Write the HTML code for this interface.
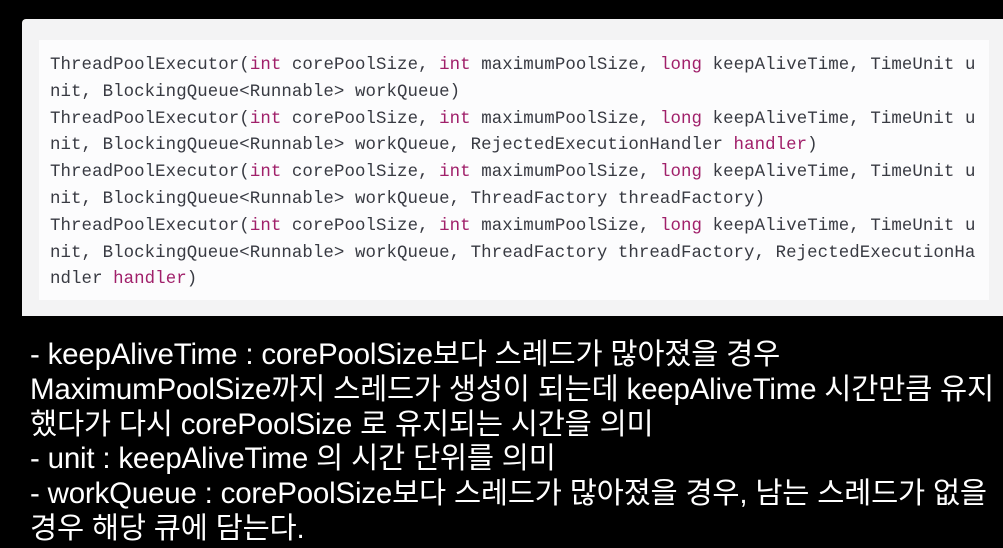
<!DOCTYPE html>
<html><head><meta charset="utf-8"><style>
html,body{margin:0;padding:0;background:#000;width:1003px;height:548px;overflow:hidden}
.outer{position:absolute;left:22px;top:19px;width:981px;height:297px;background:#f3f3f4;border-radius:4px 0 0 0}
.inner{position:absolute;left:39px;top:40px;width:950px;height:260px;background:#fcfcfd}
pre{position:absolute;left:50px;top:53px;margin:0;font-family:"Liberation Mono",monospace;font-size:17.4px;line-height:26.8px;color:#383a42;letter-spacing:0.08px}
.k{color:#a0206a}
.t{position:absolute;left:30px;top:338px;color:#fff;font-family:"Liberation Sans","Noto Sans CJK KR",sans-serif;font-size:29.5px;line-height:34.8px;white-space:pre;letter-spacing:-0.2px}
</style></head><body>
<div class="outer"></div><div class="inner"></div>
<pre>ThreadPoolExecutor(<span class="k">int</span> corePoolSize, <span class="k">int</span> maximumPoolSize, <span class="k">long</span> keepAliveTime, TimeUnit u
nit, BlockingQueue&lt;Runnable&gt; workQueue)
ThreadPoolExecutor(<span class="k">int</span> corePoolSize, <span class="k">int</span> maximumPoolSize, <span class="k">long</span> keepAliveTime, TimeUnit u
nit, BlockingQueue&lt;Runnable&gt; workQueue, RejectedExecutionHandler <span class="k">handler</span>)
ThreadPoolExecutor(<span class="k">int</span> corePoolSize, <span class="k">int</span> maximumPoolSize, <span class="k">long</span> keepAliveTime, TimeUnit u
nit, BlockingQueue&lt;Runnable&gt; workQueue, ThreadFactory threadFactory)
ThreadPoolExecutor(<span class="k">int</span> corePoolSize, <span class="k">int</span> maximumPoolSize, <span class="k">long</span> keepAliveTime, TimeUnit u
nit, BlockingQueue&lt;Runnable&gt; workQueue, ThreadFactory threadFactory, RejectedExecutionHa
ndler <span class="k">handler</span>)</pre>
<div class="t">- keepAliveTime : corePoolSize보다 스레드가 많아졌을 경우
MaximumPoolSize까지 스레드가 생성이 되는데 keepAliveTime 시간만큼 유지
했다가 다시 corePoolSize 로 유지되는 시간을 의미
- unit : keepAliveTime 의 시간 단위를 의미
- workQueue : corePoolSize보다 스레드가 많아졌을 경우, 남는 스레드가 없을
경우 해당 큐에 담는다.</div>
</body></html>
